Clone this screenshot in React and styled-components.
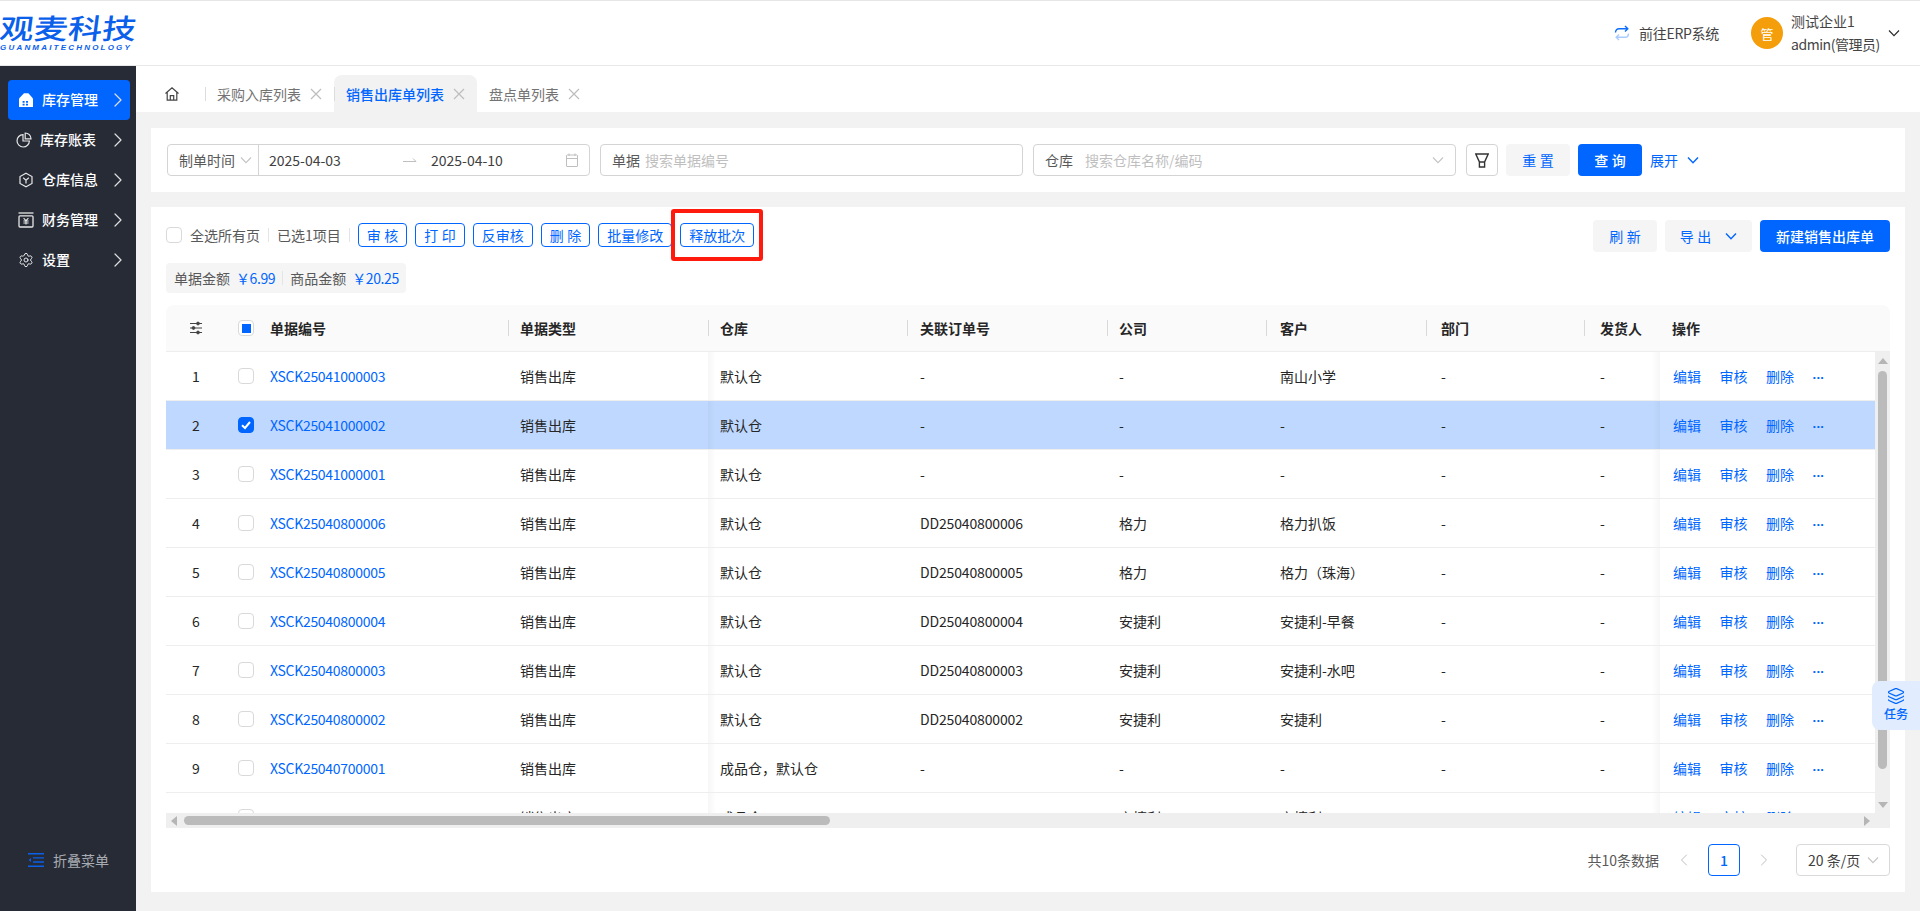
import React from 'react';
import styled, { createGlobalStyle, css } from 'styled-components';
import { ChevronRight, ChevronLeft, Settings, Layers } from 'lucide-react';

const BLUE = '#0066ff';
const COLS = '60px 32px 250px 200px 199px 200px 159px 160px 158px 76px 215px';

const rows = [
  { no: 'XSCK25041000003', wh: '默认仓', order: '-', co: '-', cust: '南山小学' },
  { no: 'XSCK25041000002', wh: '默认仓', order: '-', co: '-', cust: '-', selected: true },
  { no: 'XSCK25041000001', wh: '默认仓', order: '-', co: '-', cust: '-' },
  { no: 'XSCK25040800006', wh: '默认仓', order: 'DD25040800006', co: '格力', cust: '格力扒饭' },
  { no: 'XSCK25040800005', wh: '默认仓', order: 'DD25040800005', co: '格力', cust: '格力（珠海）' },
  { no: 'XSCK25040800004', wh: '默认仓', order: 'DD25040800004', co: '安捷利', cust: '安捷利-早餐' },
  { no: 'XSCK25040800003', wh: '默认仓', order: 'DD25040800003', co: '安捷利', cust: '安捷利-水吧' },
  { no: 'XSCK25040800002', wh: '默认仓', order: 'DD25040800002', co: '安捷利', cust: '安捷利' },
  { no: 'XSCK25040700001', wh: '成品仓，默认仓', order: '-', co: '-', cust: '-' },
  { no: '', wh: '成品仓', order: '', co: '安捷利', cust: '安捷利' },
];

const heads = [
  { label: '单据编号', pad: 12 },
  { label: '单据类型', pad: 12, sep: true },
  { label: '仓库', pad: 12, sep: true },
  { label: '关联订单号', pad: 13, sep: true },
  { label: '公司', pad: 12, sep: true },
  { label: '客户', pad: 14, sep: true },
  { label: '部门', pad: 15, sep: true },
  { label: '发货人', pad: 16, sep: true },
  { label: '操作', pad: 12 },
];

const GlobalStyle = createGlobalStyle`
  * { box-sizing: border-box; }
  html, body { margin: 0; height: 100%; overflow: hidden; }
  body {
    background: #f2f2f2;
    color: #262626;
    font-family: "Noto Sans CJK SC", "Noto Sans", sans-serif;
    font-size: 14px;
  }
`;

const Page = styled.div`
  height: 911px;
  display: flex;
  flex-direction: column;
`;

const Header = styled.header`
  height: 66px;
  flex: none;
  background: #fff;
  border-top: 1px solid #e6e6e6;
  border-bottom: 1px solid #e8e8e8;
  display: flex;
  align-items: center;
  justify-content: space-between;
  padding-right: 20px;
`;

const Logo = styled.div`
  width: 136px;
  color: #0a60ea;
  line-height: 1;
  margin-top: -1px;
`;

const LogoMain = styled.div`
  font-size: 28px;
  font-weight: 500;
  white-space: nowrap;
  height: 30px;
  transform-origin: left center;
  transform: scaleX(1.22) skewX(-6deg);
`;

const LogoSub = styled.div`
  font-family: "Liberation Sans", sans-serif;
  font-size: 8px;
  font-style: italic;
  font-weight: 700;
  letter-spacing: 2.2px;
  white-space: nowrap;
  margin-top: 1px;
`;

const HeaderRight = styled.div`
  display: flex;
  align-items: center;
`;

const ErpLink = styled.div`
  display: flex;
  align-items: center;
  gap: 9px;
  color: #444;
  margin-right: 32px;
  letter-spacing: -0.3px;
`;

const Avatar = styled.div`
  width: 32px;
  height: 32px;
  border-radius: 50%;
  background: #f59e0b;
  color: #fff;
  display: flex;
  align-items: center;
  justify-content: center;
  font-size: 13px;
  margin-right: 8px;
`;

const UserInfo = styled.div`
  display: flex;
  flex-direction: column;
  width: 88px;
  color: #444;
  line-height: 23px;
  margin-right: 9px;
  white-space: nowrap;
`;

const UserRole = styled.span`
  letter-spacing: -0.45px;
`;

const Body = styled.div`
  flex: 1;
  min-height: 0;
  display: flex;
`;

const Sidebar = styled.aside`
  width: 136px;
  flex: none;
  background: #272b36;
  display: flex;
  flex-direction: column;
  padding: 14px 6px 0 8px;
`;

const MenuItem = styled.div`
  height: 40px;
  flex: none;
  border-radius: 4px;
  display: flex;
  align-items: center;
  padding-left: 10px;
  color: #fff;
  font-weight: 500;
  background: ${(p) => (p.$active ? BLUE : 'transparent')};
  svg:first-child { width: 16px; height: 16px; flex: none; }
`;

const MenuText = styled.span`
  flex: 1;
  margin-left: 8px;
  padding-bottom: 2px;
`;

const PieSvg = styled.svg`
  margin-left: -2px;
`;

const Collapse = styled.div`
  margin-top: auto;
  margin-bottom: 41px;
  display: flex;
  align-items: center;
  gap: 9px;
  padding-left: 20px;
  color: #a8abb2;
`;

const Main = styled.main`
  flex: 1;
  min-width: 0;
  display: flex;
  flex-direction: column;
`;

const TabBar = styled.nav`
  height: 46px;
  flex: none;
  background: #fff;
  display: flex;
  align-items: flex-end;
  padding-left: 28px;
`;

const HomeBtn = styled.div`
  width: 41px;
  height: 37px;
  display: flex;
  align-items: center;
  color: #444;
`;

const Tab = styled.div`
  position: relative;
  height: 37px;
  display: flex;
  align-items: center;
  gap: 9px;
  padding: 0 12px;
  border-radius: 8px 8px 0 0;
  color: ${(p) => (p.$active ? BLUE : '#737373')};
  background: ${(p) => (p.$active ? '#f2f2f2' : '#fff')};
  font-weight: ${(p) => (p.$active ? 500 : 400)};
  svg { color: #bdbdbd; }
  ${(p) =>
    p.$sep &&
    css`
      &::before {
        content: '';
        position: absolute;
        left: 0;
        top: 12px;
        width: 1px;
        height: 14px;
        background: #dcdcdc;
      }
    `}
`;

const Content = styled.div`
  flex: 1;
  min-height: 0;
  display: flex;
  flex-direction: column;
  gap: 15px;
  padding: 16px 15px 19px;
`;

const FilterCard = styled.section`
  height: 64px;
  flex: none;
  background: #fff;
  display: flex;
  align-items: center;
  padding-left: 16px;
`;

const Field = styled.div`
  width: ${(p) => p.$width}px;
  height: 32px;
  flex: none;
  margin-right: 10px;
  border: 1px solid #d4d4d4;
  border-radius: 4px;
  display: flex;
  align-items: center;
  padding: 0 ${(p) => (p.$bare ? 0 : 11)}px;
  color: #595959;
  background: #fff;
`;

const RangeType = styled.div`
  width: 91px;
  height: 100%;
  flex: none;
  border-right: 1px solid #d4d4d4;
  display: flex;
  align-items: center;
  gap: 5px;
  padding-left: 11px;
  svg { color: #c4c4c4; }
`;

const RangeDates = styled.div`
  flex: 1;
  display: grid;
  grid-template-columns: 134px 28px 1fr auto;
  align-items: center;
  padding: 0 11px 0 10px;
  color: #404040;
  svg { color: #bfbfbf; }
`;

const Placeholder = styled.span`
  color: #bfbfbf;
  margin-left: ${(p) => p.$left}px;
`;

const FieldEnd = styled.span`
  margin-left: auto;
  display: flex;
  color: #c4c4c4;
`;

const IconBtn = styled.button`
  width: 32px;
  height: 32px;
  flex: none;
  margin-right: 8px;
  padding: 0;
  border: 1px solid #d4d4d4;
  border-radius: 4px;
  background: #fff;
  color: #333;
  display: flex;
  align-items: center;
  justify-content: center;
`;

const Btn = styled.button`
  height: 32px;
  flex: none;
  width: ${(p) => (p.$width ? `${p.$width}px` : 'auto')};
  margin-right: ${(p) => p.$gap ?? 0}px;
  border: none;
  border-radius: 4px;
  padding: 0;
  font: inherit;
  font-weight: ${(p) => (p.$primary ? 500 : 400)};
  background: ${(p) => (p.$primary ? BLUE : '#f5f5f5')};
  color: ${(p) => (p.$primary ? '#fff' : BLUE)};
  display: flex;
  align-items: center;
  justify-content: center;
  gap: ${(p) => p.$inner ?? 0}px;
`;

const Spaced = styled.span`
  letter-spacing: 3.5px;
  margin-right: -3.5px;
`;

const Expand = styled.div`
  display: flex;
  align-items: center;
  gap: 9px;
  color: ${BLUE};
`;

const TableCard = styled.section`
  flex: 1;
  min-height: 0;
  background: #fff;
  padding: 12px 15px 0;
  display: flex;
  flex-direction: column;
`;

const Toolbar = styled.div`
  height: 33px;
  flex: none;
  display: flex;
  align-items: center;
  justify-content: space-between;
`;

const ToolLeft = styled.div`
  display: flex;
  align-items: center;
  margin-bottom: 2px;
`;

const ToolRight = styled.div`
  display: flex;
  align-items: center;
  gap: 8px;
`;

const Check = styled.span`
  width: 16px;
  height: 16px;
  flex: none;
  border-radius: 4px;
  border: 1px solid ${(p) => (p.$on ? BLUE : '#d9d9d9')};
  background: ${(p) => (p.$on ? BLUE : '#fff')};
  display: inline-flex;
  align-items: center;
  justify-content: center;
`;

const Dot = styled.span`
  width: 9px;
  height: 9px;
  background: ${BLUE};
`;

const Selection = styled.span`
  margin-left: ${(p) => p.$left}px;
  color: #595959;
  white-space: nowrap;
`;

const Divider = styled.span`
  width: 1px;
  height: 14px;
  flex: none;
  background: #e4e4e4;
  margin: 0 ${(p) => p.$space}px;
`;

const OutlineBtn = styled.button`
  position: relative;
  height: 24px;
  padding: 0 8px;
  margin-right: 8px;
  border: 1px solid ${BLUE};
  border-radius: 4px;
  background: #fff;
  color: ${BLUE};
  font: inherit;
  display: flex;
  align-items: center;
  white-space: nowrap;
`;

const MarkedBtn = styled(OutlineBtn)`
  &::after {
    content: '';
    position: absolute;
    left: -10px;
    right: -10px;
    top: -15px;
    bottom: -15px;
    border: 4px solid #ff1a0e;
    border-radius: 3px;
  }
`;

const Summary = styled.div`
  align-self: flex-start;
  width: 240px;
  height: 30px;
  flex: none;
  margin-top: 11px;
  padding: 0 8px;
  border-radius: 4px;
  background: #f5f5f5;
  display: flex;
  align-items: center;
  color: #595959;
  white-space: nowrap;
`;

const Amount = styled.span`
  color: ${BLUE};
  margin-left: 6px;
  letter-spacing: -0.4px;
`;

const Table = styled.div`
  margin-top: 12px;
  flex: none;
`;

const HeadRow = styled.div`
  height: 47px;
  display: grid;
  grid-template-columns: ${COLS} 15px;
  background: #fafafa;
  border-radius: 8px 8px 0 0;
  border-bottom: 1px solid #eee;
  font-weight: 600;
`;

const cellLayout = css`
  position: relative;
  display: flex;
  align-items: center;
  min-width: 0;
  white-space: nowrap;
  padding-left: ${(p) => p.$pad ?? 0}px;
  justify-content: ${(p) => (p.$center ? 'center' : 'flex-start')};
`;

const HeadCell = styled.div`
  ${cellLayout}
  ${(p) =>
    p.$sep &&
    css`
      &::before {
        content: '';
        position: absolute;
        left: 0;
        top: 15px;
        width: 1px;
        height: 16px;
        background: #d9d9d9;
      }
    `}
`;

const TableBody = styled.div`
  height: 461px;
  display: flex;
`;

const RowList = styled.div`
  flex: 1;
  min-width: 0;
  overflow: hidden;
`;

const Row = styled.div`
  height: 49px;
  display: grid;
  grid-template-columns: ${COLS};
  border-bottom: 1px solid #eee;
  background: ${(p) => (p.$selected ? '#bfd8ff' : '#fff')};
`;

const Cell = styled.div`
  ${cellLayout}
  ${(p) =>
    p.$shadowRight &&
    css`
      &::before {
        content: '';
        position: absolute;
        left: 0;
        top: 0;
        bottom: 0;
        width: 8px;
        background: linear-gradient(to right, rgba(0, 0, 0, 0.035), transparent);
      }
    `}
  ${(p) =>
    p.$shadowLeft &&
    css`
      &::before {
        content: '';
        position: absolute;
        right: 100%;
        top: 0;
        bottom: 0;
        width: 8px;
        background: linear-gradient(to left, rgba(0, 0, 0, 0.035), transparent);
      }
    `}
`;

const DocLink = styled.span`
  color: ${BLUE};
  letter-spacing: -0.3px;
`;

const OrderNo = styled.span`
  letter-spacing: -0.15px;
`;

const Actions = styled.div`
  display: flex;
  align-items: center;
  gap: 18.5px;
  color: ${BLUE};
`;

const More = styled.span`
  font-family: "Liberation Sans", sans-serif;
  font-size: 13px;
  font-weight: 700;
  letter-spacing: -0.4px;
  margin-top: 2px;
`;

const VBar = styled.div`
  width: 15px;
  flex: none;
  background: #efefef;
  display: flex;
  flex-direction: column;
  align-items: center;
  padding: 6px 0 5px;
`;

const ArrowUp = styled.span`
  border-left: 5px solid transparent;
  border-right: 5px solid transparent;
  border-bottom: 6px solid #b5b5b5;
`;

const ArrowDown = styled.span`
  margin-top: auto;
  border-left: 5px solid transparent;
  border-right: 5px solid transparent;
  border-top: 6px solid #b5b5b5;
`;

const VThumb = styled.div`
  width: 9px;
  height: 398px;
  margin-top: 7px;
  border-radius: 5px;
  background: #bbb;
`;

const HBar = styled.div`
  height: 15px;
  background: #efefef;
  display: flex;
  align-items: center;
  padding: 0 20px 0 5px;
`;

const ArrowLeft = styled.span`
  border-top: 5px solid transparent;
  border-bottom: 5px solid transparent;
  border-right: 6px solid #b5b5b5;
`;

const ArrowRight = styled.span`
  margin-left: auto;
  border-top: 5px solid transparent;
  border-bottom: 5px solid transparent;
  border-left: 6px solid #b5b5b5;
`;

const HThumb = styled.div`
  width: 646px;
  height: 9px;
  margin-left: 7px;
  border-radius: 5px;
  background: #bbb;
`;

const Pager = styled.div`
  margin-top: 16px;
  height: 32px;
  flex: none;
  display: flex;
  align-items: center;
  justify-content: flex-end;
  color: #595959;
`;

const PageArrow = styled.span`
  width: ${(p) => p.$width}px;
  display: flex;
  justify-content: center;
  color: #bfbfbf;
`;

const PageNum = styled.div`
  width: 32px;
  height: 32px;
  border: 1px solid ${BLUE};
  border-radius: 4px;
  color: ${BLUE};
  font-weight: 500;
  display: flex;
  align-items: center;
  justify-content: center;
`;

const PageSize = styled.div`
  width: 94px;
  height: 32px;
  margin-left: 8px;
  border: 1px solid #d9d9d9;
  border-radius: 4px;
  display: flex;
  align-items: center;
  gap: 7px;
  padding-left: 11px;
  color: #404040;
  white-space: nowrap;
  svg { color: #c4c4c4; }
`;

const TaskFloat = styled.div`
  position: fixed;
  right: 0;
  top: 681px;
  width: 48px;
  height: 49px;
  border-radius: 8px 0 0 8px;
  background: #e1edff;
  color: ${BLUE};
  font-size: 12px;
  font-weight: 500;
  display: flex;
  flex-direction: column;
  align-items: center;
  padding-top: 6px;
  line-height: 17px;
`;

const Caret = ({ width = 1.1 }) => (
  <svg width="12" height="12" viewBox="0 0 12 12" fill="none" stroke="currentColor" strokeWidth={width}>
    <path d="M1 3.5 6 8.7l5-5.2" />
  </svg>
);

const CloseIcon = () => (
  <svg width="12" height="12" viewBox="0 0 12 12" fill="none" stroke="currentColor" strokeWidth="1.2">
    <path d="M1 1l10 10M11 1 1 11" />
  </svg>
);

const HomeIcon = () => (
  <svg width="16" height="16" viewBox="0 0 16 16" fill="none" stroke="currentColor" strokeWidth="1.2">
    <path d="M1.5 7.5 8 1.8l6.5 5.7M3.2 6.3v7.9h9.6V6.3M6.3 14.2V9.6h3.4v4.6" />
  </svg>
);

const HouseFill = () => (
  <svg viewBox="0 0 16 16">
    <path fill="#fff" d="M1 15V6.6L6 1.2h4.4L15 6.6V15z" />
    <path fill="#0066ff" d="M4.6 9h2v1.7h-2zM8 9h2v1.7H8zM4.6 11.8h2v1.7h-2zM8 11.8h2v1.7H8z" />
  </svg>
);

const PieIcon = () => (
  <PieSvg viewBox="0 0 16 16" fill="none" stroke="#e6e6e6" strokeWidth="1.2">
    <path d="M7 2.6a6.2 6.2 0 1 0 6.4 6.4H7z" />
    <path d="M9.2 1v5.8H15A5.8 5.8 0 0 0 9.2 1z" />
  </PieSvg>
);

const BoxIcon = () => (
  <svg viewBox="0 0 16 16" fill="none" stroke="#e6e6e6" strokeWidth="1.2">
    <path d="M8 1.2 14 4.6v6.8l-6 3.4-6-3.4V4.6z" />
    <path d="M5.2 5.8 8 8.2l2.8-2.4M8 8.2v3.2" />
  </svg>
);

const CashIcon = () => (
  <svg viewBox="0 0 16 16" fill="none" stroke="#e6e6e6" strokeWidth="1.3">
    <path d="M.5 1h15" />
    <rect x="1" y="3.8" width="14" height="11.2" rx="1" />
    <path d="M5.6 6.2 8 8.6l2.4-2.4M5.4 9h5.2M5.4 11h5.2M8 8.6v4" strokeWidth="1.1" />
  </svg>
);

const SyncIcon = () => (
  <svg width="16" height="16" viewBox="0 0 16 16" fill="none" strokeWidth="1.4">
    <path stroke="#0d6efd" d="M1.5 7.6C1.5 5.2 3 3.8 5 3.8h8.6M11 1l2.8 2.8L11 6.4" />
    <path stroke="#a9cbff" d="M14.5 8.4c0 2.4-1.5 3.8-3.5 3.8H2.4M5 15l-2.8-2.8L5 9.6" />
  </svg>
);

const FunnelIcon = () => (
  <svg width="14" height="15" viewBox="0 0 14 15" fill="none" stroke="currentColor" strokeWidth="1.4">
    <path d="M.8 1h12.4L9.6 9v5H4.4V9zM4.4 9h5.2" />
  </svg>
);

const SlidersIcon = () => (
  <svg width="14" height="14" viewBox="0 0 14 14" fill="#444" stroke="#444">
    <path d="M1 2.5h12M1 7h12M1 11.5h12" strokeWidth="1" />
    <circle cx="9" cy="2.5" r="1.4" />
    <circle cx="4.5" cy="7" r="1.4" />
    <circle cx="9" cy="11.5" r="1.4" />
  </svg>
);

const CalendarIcon = () => (
  <svg width="12" height="14" viewBox="0 0 12 14" fill="none" stroke="currentColor">
    <rect x="0.5" y="2" width="11" height="11.5" rx="0.5" />
    <path d="M0.5 5.5h11M3 0.5V3M9 0.5V3" />
  </svg>
);

const RangeArrow = () => (
  <svg width="14" height="6" viewBox="0 0 14 6" fill="none" stroke="#bfbfbf">
    <path d="M0 4.5h13L10 1.5" />
  </svg>
);

const CollapseIcon = () => (
  <svg width="16" height="14" viewBox="0 0 16 14" fill="none" stroke="#0a60ea" strokeWidth="1.4">
    <path d="M0 .8h16M5 4.9h11M5 9h11M0 13.2h16" />
    <path d="M3 5v4L.6 7z" fill="#0a60ea" stroke="none" />
  </svg>
);

const CheckMark = () => (
  <svg width="12" height="12" viewBox="0 0 12 12" fill="none" stroke="#fff" strokeWidth="2">
    <path d="M2 6.2 5 9l5-6" />
  </svg>
);

const menu = [
  { label: '库存管理', icon: <HouseFill />, active: true },
  { label: '库存账表', icon: <PieIcon /> },
  { label: '仓库信息', icon: <BoxIcon /> },
  { label: '财务管理', icon: <CashIcon /> },
  { label: '设置', icon: <Settings color="#e6e6e6" strokeWidth={1.5} /> },
];

const tabs = [
  { label: '采购入库列表', sep: true },
  { label: '销售出库单列表', active: true, sep: true },
  { label: '盘点单列表' },
];

const App = () => {
  return (
    <Page>
      <GlobalStyle />
      <Header>
        <Logo>
          <LogoMain>观麦科技</LogoMain>
          <LogoSub>GUANMAITECHNOLOGY</LogoSub>
        </Logo>
        <HeaderRight>
          <ErpLink>
            <SyncIcon />
            前往ERP系统
          </ErpLink>
          <Avatar>管</Avatar>
          <UserInfo>
            <span>测试企业1</span>
            <UserRole>admin(管理员)</UserRole>
          </UserInfo>
          <Caret />
        </HeaderRight>
      </Header>
      <Body>
        <Sidebar>
          {menu.map((m) => (
            <MenuItem key={m.label} $active={m.active}>
              {m.icon}
              <MenuText>{m.label}</MenuText>
              <ChevronRight size={24} strokeWidth={1.2} color="#e0e0e0" />
            </MenuItem>
          ))}
          <Collapse>
            <CollapseIcon />
            折叠菜单
          </Collapse>
        </Sidebar>
        <Main>
          <TabBar>
            <HomeBtn>
              <HomeIcon />
            </HomeBtn>
            {tabs.map((t) => (
              <Tab key={t.label} $active={t.active} $sep={t.sep}>
                {t.label}
                <CloseIcon />
              </Tab>
            ))}
          </TabBar>
          <Content>
            <FilterCard>
              <Field $width={423} $bare>
                <RangeType>
                  制单时间
                  <Caret />
                </RangeType>
                <RangeDates>
                  <span>2025-04-03</span>
                  <RangeArrow />
                  <span>2025-04-10</span>
                  <CalendarIcon />
                </RangeDates>
              </Field>
              <Field $width={423}>
                单据
                <Placeholder $left={5}>搜索单据编号</Placeholder>
              </Field>
              <Field $width={423}>
                仓库
                <Placeholder $left={12}>搜索仓库名称/编码</Placeholder>
                <FieldEnd>
                  <Caret />
                </FieldEnd>
              </Field>
              <IconBtn>
                <FunnelIcon />
              </IconBtn>
              <Btn $width={64} $gap={8}>
                <Spaced>重置</Spaced>
              </Btn>
              <Btn $width={64} $gap={8} $primary>
                <Spaced>查询</Spaced>
              </Btn>
              <Expand>
                展开
                <Caret width={1.4} />
              </Expand>
            </FilterCard>

            <TableCard>
              <Toolbar>
                <ToolLeft>
                  <Check />
                  <Selection $left={8}>全选所有页</Selection>
                  <Divider $space={8} />
                  <Selection $left={0}>已选1项目</Selection>
                  <Divider $space={8} />
                  <OutlineBtn>
                    <Spaced>审核</Spaced>
                  </OutlineBtn>
                  <OutlineBtn>
                    <Spaced>打印</Spaced>
                  </OutlineBtn>
                  <OutlineBtn>反审核</OutlineBtn>
                  <OutlineBtn>
                    <Spaced>删除</Spaced>
                  </OutlineBtn>
                  <OutlineBtn>批量修改</OutlineBtn>
                  <MarkedBtn>释放批次</MarkedBtn>
                </ToolLeft>
                <ToolRight>
                  <Btn $width={64}>
                    <Spaced>刷新</Spaced>
                  </Btn>
                  <Btn $width={87} $inner={14}>
                    <Spaced>导出</Spaced>
                    <Caret width={1.4} />
                  </Btn>
                  <Btn $width={130} $primary>
                    新建销售出库单
                  </Btn>
                </ToolRight>
              </Toolbar>

              <Summary>
                单据金额
                <Amount>￥6.99</Amount>
                <Divider $space={7} />
                商品金额
                <Amount>￥20.25</Amount>
              </Summary>

              <Table>
                <HeadRow>
                  <HeadCell $center>
                    <SlidersIcon />
                  </HeadCell>
                  <HeadCell $pad={12}>
                    <Check>
                      <Dot />
                    </Check>
                  </HeadCell>
                  {heads.map((h) => (
                    <HeadCell key={h.label} $pad={h.pad} $sep={h.sep}>
                      {h.label}
                    </HeadCell>
                  ))}
                  <HeadCell />
                </HeadRow>
                <TableBody>
                  <RowList>
                    {rows.map((r, i) => (
                      <Row key={i} $selected={r.selected}>
                        <Cell $center>{i + 1}</Cell>
                        <Cell $pad={12}>
                          <Check $on={r.selected}>{r.selected && <CheckMark />}</Check>
                        </Cell>
                        <Cell $pad={12}>
                          <DocLink>{r.no}</DocLink>
                        </Cell>
                        <Cell $pad={12}>销售出库</Cell>
                        <Cell $pad={12} $shadowRight>
                          {r.wh}
                        </Cell>
                        <Cell $pad={13}>
                          <OrderNo>{r.order}</OrderNo>
                        </Cell>
                        <Cell $pad={12}>{r.co}</Cell>
                        <Cell $pad={14}>{r.cust}</Cell>
                        <Cell $pad={15}>-</Cell>
                        <Cell $pad={16}>-</Cell>
                        <Cell $pad={13} $shadowLeft>
                          <Actions>
                            <span>编辑</span>
                            <span>审核</span>
                            <span>删除</span>
                            <More>···</More>
                          </Actions>
                        </Cell>
                      </Row>
                    ))}
                  </RowList>
                  <VBar>
                    <ArrowUp />
                    <VThumb />
                    <ArrowDown />
                  </VBar>
                </TableBody>
                <HBar>
                  <ArrowLeft />
                  <HThumb />
                  <ArrowRight />
                </HBar>
              </Table>

              <Pager>
                共10条数据
                <PageArrow $width={49}>
                  <ChevronLeft size={20} strokeWidth={1.2} />
                </PageArrow>
                <PageNum>1</PageNum>
                <PageArrow $width={48}>
                  <ChevronRight size={20} strokeWidth={1.2} />
                </PageArrow>
                <PageSize>
                  20 条/页
                  <Caret />
                </PageSize>
              </Pager>
            </TableCard>
          </Content>
        </Main>
      </Body>
      <TaskFloat>
        <Layers size={18} strokeWidth={1.6} />
        任务
      </TaskFloat>
    </Page>
  );
};

export default App;
